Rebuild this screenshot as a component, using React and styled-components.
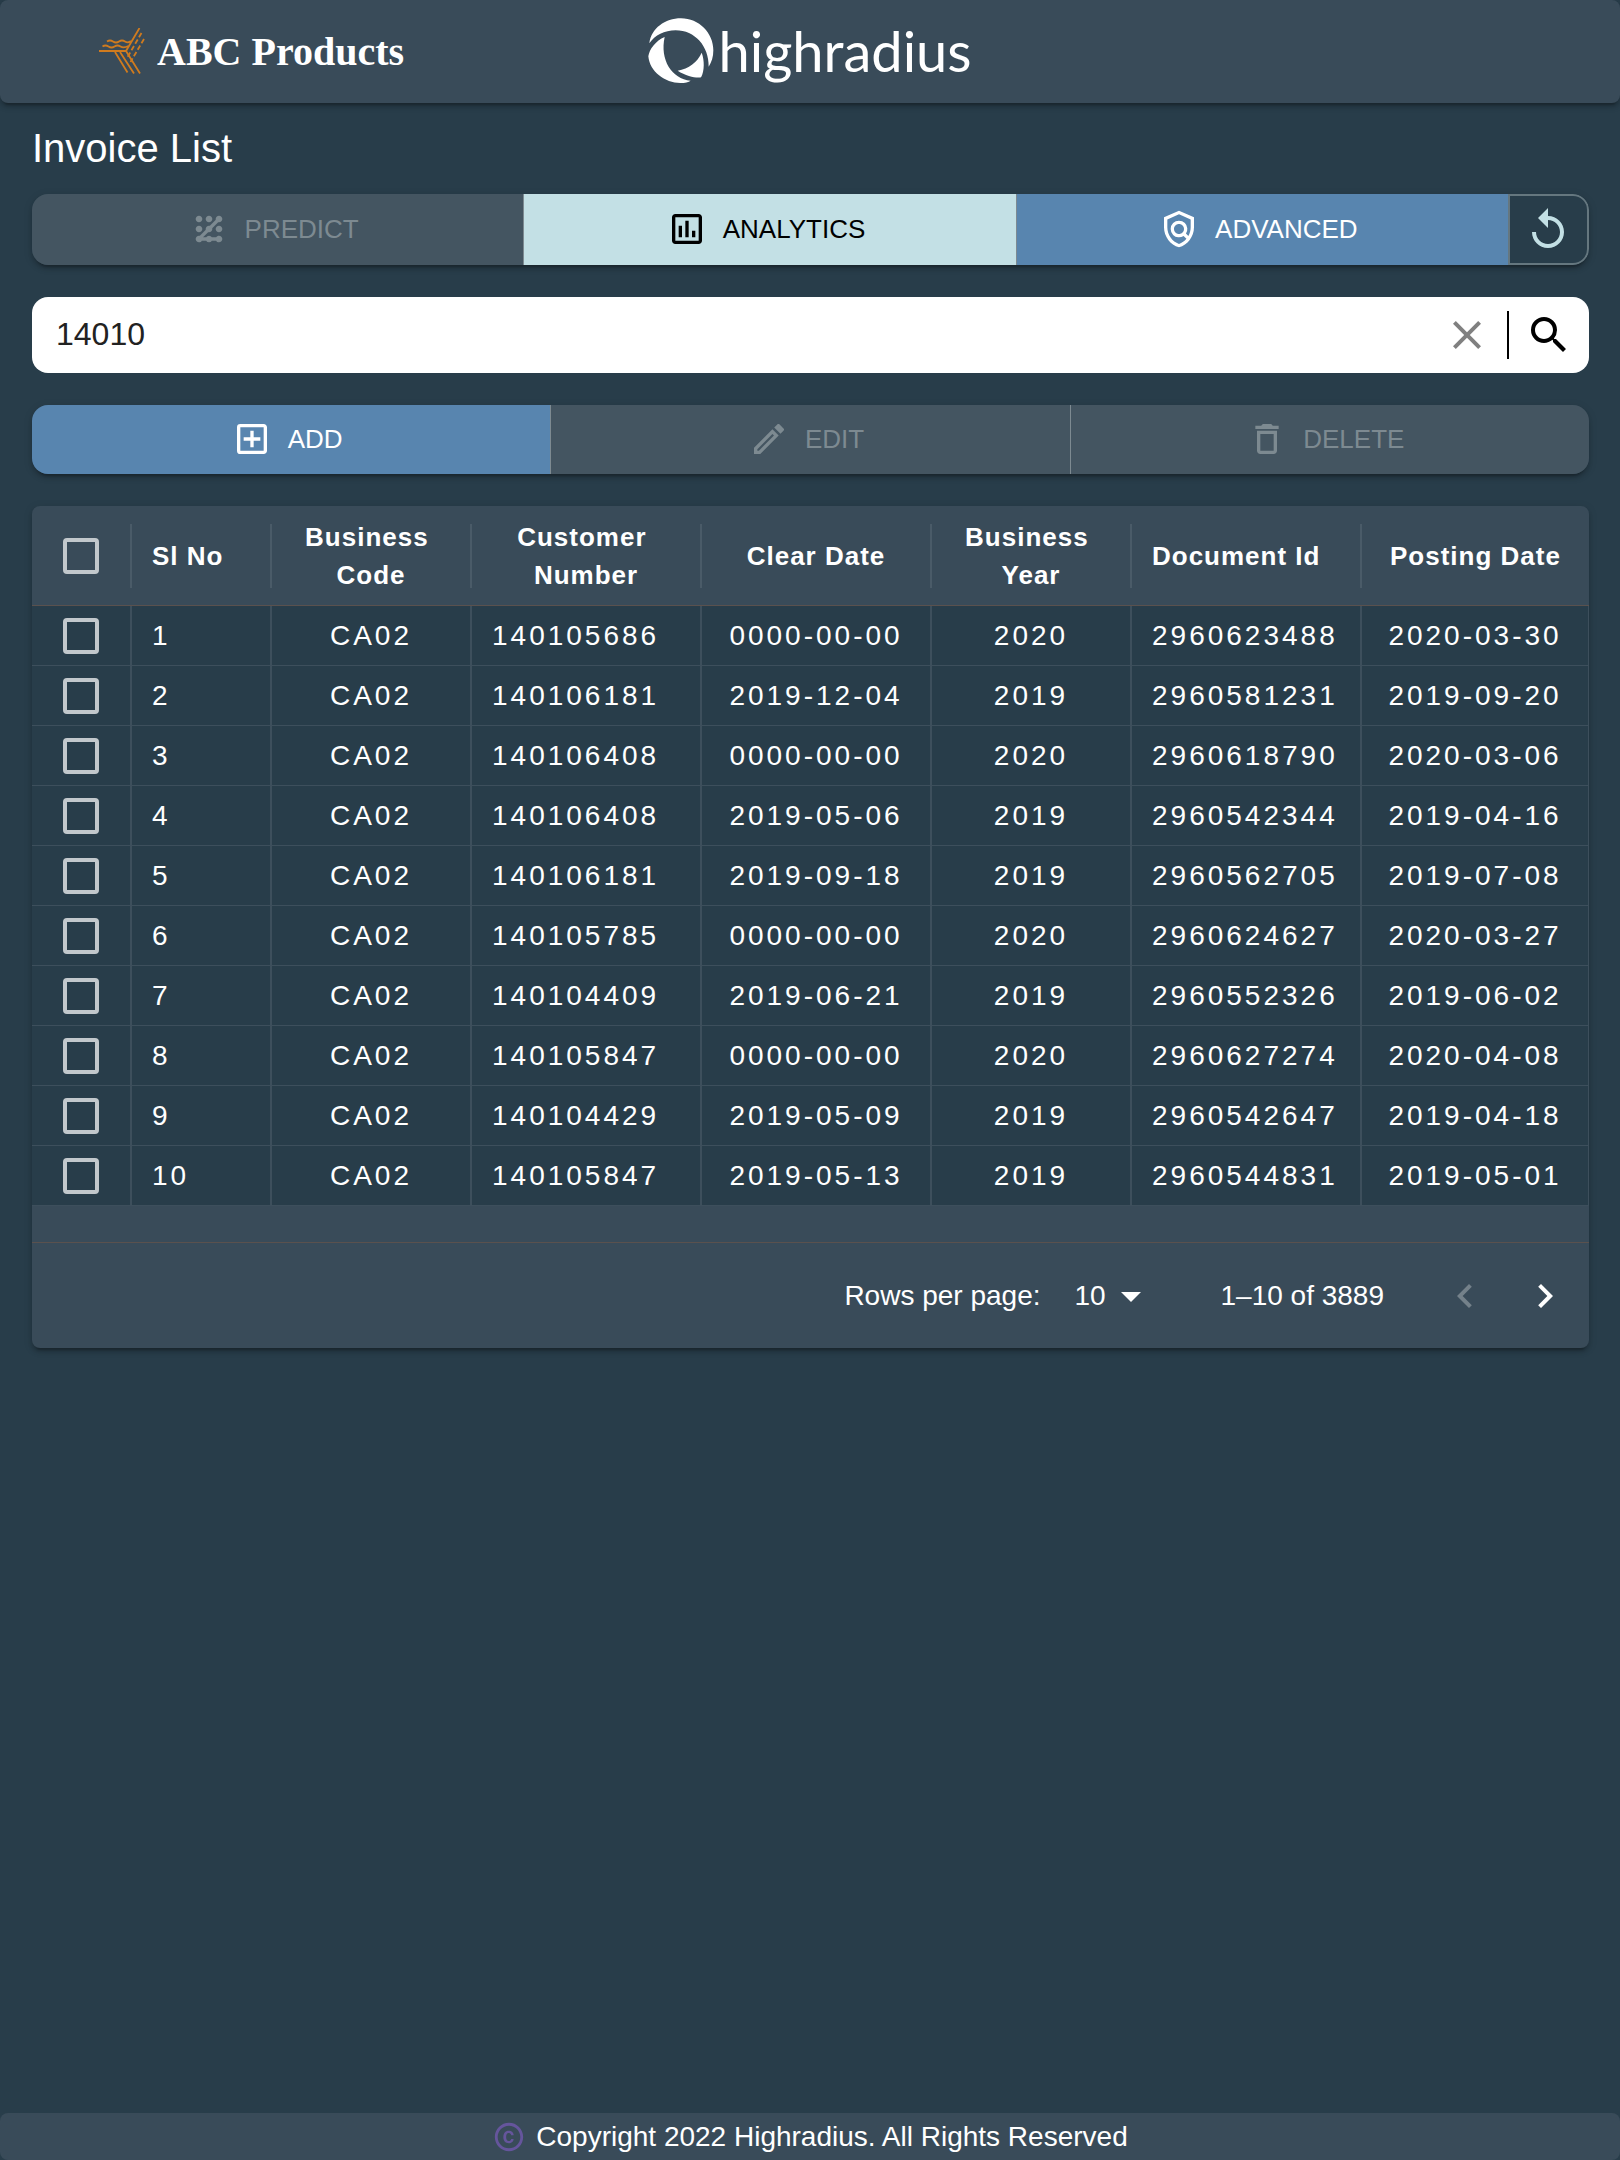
import React, { useState } from "react";
import styled, { createGlobalStyle, css } from "styled-components";
import {
  MdPattern,
  MdOutlineAssessment,
  MdOutlinePolicy,
  MdReplay,
  MdClear,
  MdSearch,
  MdOutlineAddBox,
  MdOutlineEdit,
  MdDeleteOutline,
  MdArrowDropDown,
  MdKeyboardArrowLeft,
  MdKeyboardArrowRight,
  MdOutlineCopyright,
} from "react-icons/md";

const color = {
  page: "#283d4a",
  panel: "#394b59",
  disabled: "#445561",
  muted: "#7d8a91",
  blue: "#5885af",
  light: "#c3e0e5",
  line: "#3d4f5c",
  headLine: "#4a5b68",
  rule: "#5a514e",
};

const elevation =
  "0 6px 2px -4px rgba(0,0,0,.2), 0 4px 4px rgba(0,0,0,.14), 0 2px 10px rgba(0,0,0,.12)";

const GlobalStyle = createGlobalStyle`
  *, *::before, *::after { box-sizing: border-box; }
  body {
    margin: 0;
    background: ${color.page};
    color: #fff;
    font-family: "Liberation Sans", Arial, sans-serif;
  }
  button, input, select { font: inherit; color: inherit; }
`;

const Page = styled.div`
  min-height: 100vh;
  display: flex;
  flex-direction: column;
`;

const Header = styled.header`
  display: grid;
  grid-template-columns: 1fr auto 1fr;
  align-items: center;
  height: 103px;
  padding: 0 32px;
  background: ${color.panel};
  border-radius: 8px;
  box-shadow: ${elevation};
`;

const Brand = styled.div`
  display: flex;
  align-items: center;
  gap: 12px;
  padding-left: 66px;
  font: bold 40px/48px "Liberation Serif", "Times New Roman", serif;
`;

const Logo = styled.div`
  display: flex;
  align-items: center;
  gap: 4px;
  padding-bottom: 2px;
  font: 400 56px/64px Lato, sans-serif;
`;

const Main = styled.main`
  flex: 1;
  padding: 0 31px 32px 32px;
`;

const Title = styled.h1`
  margin: 0;
  padding: 21px 0 22px;
  font-size: 40px;
  line-height: 48px;
  font-weight: 400;
`;

const Stack = styled.div`
  display: flex;
  flex-direction: column;
  gap: 32px;
`;

const ButtonGroup = styled.div`
  display: flex;
  height: ${(p) => p.$height}px;
  border-radius: 16px;
  overflow: hidden;
  box-shadow: ${elevation};
`;

const tones = {
  primary: css`
    background: ${color.blue};
    color: #fff;
  `,
  light: css`
    background: ${color.light};
    color: #000;
  `,
};

const GroupButton = styled.button`
  flex: 1;
  display: flex;
  align-items: center;
  justify-content: center;
  gap: 16px;
  padding: 0 16px 2px;
  border: 0;
  font-size: 26px;
  line-height: 38px;
  text-transform: uppercase;
  cursor: pointer;
  ${(p) => tones[p.$tone]}

  & + & {
    border-left: 1px solid ${color.muted};
  }

  &:disabled {
    background: ${color.disabled};
    color: ${color.muted};
    cursor: default;
  }

  svg {
    width: 40px;
    height: 40px;
    margin-left: -8px;
  }
`;

const ResetButton = styled.button`
  display: flex;
  align-items: center;
  justify-content: center;
  width: 81px;
  padding: 0;
  border: 2px solid #65777f;
  border-radius: 0 16px 16px 0;
  background: ${color.page};
  color: ${color.light};
  cursor: pointer;
`;

const SearchBar = styled.form`
  display: flex;
  align-items: center;
  gap: 16px;
  height: 76px;
  padding: 0 16px 0 24px;
  border-radius: 16px;
  background: #fff;
  color: #000;
`;

const SearchInput = styled.input`
  flex: 1;
  min-width: 0;
  height: 48px;
  padding: 0 0 2px;
  border: 0;
  outline: 0;
  background: transparent;
  color: #222;
  font-size: 32px;
`;

const SearchDivider = styled.span`
  width: 2px;
  height: 48px;
  background: #000;
`;

const IconButton = styled.button`
  display: flex;
  padding: ${(p) => p.$pad || 0}px;
  border: 0;
  background: transparent;
  color: ${(p) => p.$color || "inherit"};
  cursor: pointer;
`;

const Card = styled.section`
  border-radius: 8px;
  background: ${color.panel};
  box-shadow: ${elevation};
`;

const Table = styled.table`
  width: 100%;
  table-layout: fixed;
  border-collapse: separate;
  border-spacing: 0;
`;

const HeadCell = styled.th`
  width: ${(p) => (p.$width ? `${p.$width}px` : "auto")};
  height: 100px;
  padding: 0 22px 0 20px;
  border-bottom: 1px solid ${color.rule};
  text-align: ${(p) => p.$align || "center"};
  white-space: break-spaces;
  font-size: 26px;
  line-height: 38px;
  letter-spacing: 1px;
  background: linear-gradient(${color.headLine}, ${color.headLine}) right center / 2px 64px no-repeat;

  &:last-child {
    padding-right: 20px;
    background: none;
  }
`;

const Cell = styled.td`
  height: 60px;
  padding: 0 20px;
  border-right: 2px solid ${color.line};
  border-bottom: 1px solid ${color.line};
  background: ${color.page};
  text-align: ${(p) => p.$align || "center"};
  white-space: nowrap;
  font-size: 28px;
  line-height: 40px;
  letter-spacing: 3px;

  &:last-child {
    border-right-width: 1px;
  }
`;

const Checkbox = styled.input`
  appearance: none;
  display: block;
  width: 36px;
  height: 36px;
  margin: 0 auto;
  border: 4px solid #c2c8cc;
  border-radius: 4px;
  cursor: pointer;

  &:checked {
    background: ${color.blue};
  }
`;

const Pagination = styled.nav`
  display: flex;
  align-items: center;
  justify-content: flex-end;
  height: 106px;
  margin-top: 36px;
  padding-right: 4px;
  border-top: 1px solid ${color.rule};
  font-size: 28px;
  line-height: 40px;
`;

const PageSize = styled.div`
  position: relative;
  width: 80px;
  margin: 0 66px 0 34px;

  svg {
    position: absolute;
    top: -4px;
    right: 0;
    pointer-events: none;
  }
`;

const Select = styled.select`
  appearance: none;
  display: block;
  width: 100%;
  height: 40px;
  padding: 0 0 2px;
  border: 0;
  outline: 0;
  background: transparent;
`;

const Range = styled.span`
  margin-right: 41px;
`;

const Footer = styled.footer`
  display: flex;
  align-items: center;
  justify-content: center;
  gap: 10px;
  height: 47px;
  border-radius: 8px;
  background: ${color.panel};
  font-size: 28px;
  line-height: 40px;

  svg {
    color: #65559c;
  }
`;

const columns = [
  { label: "Sl No", width: 140, align: "left" },
  { label: "Business Code", width: 200 },
  { label: "Customer Number", width: 230, bodyAlign: "left" },
  { label: "Clear Date", width: 230 },
  { label: "Business Year", width: 200 },
  { label: "Document Id", width: 230, align: "left" },
  { label: "Posting Date" },
];

const rows = [
  ["1", "CA02", "140105686", "0000-00-00", "2020", "2960623488", "2020-03-30"],
  ["2", "CA02", "140106181", "2019-12-04", "2019", "2960581231", "2019-09-20"],
  ["3", "CA02", "140106408", "0000-00-00", "2020", "2960618790", "2020-03-06"],
  ["4", "CA02", "140106408", "2019-05-06", "2019", "2960542344", "2019-04-16"],
  ["5", "CA02", "140106181", "2019-09-18", "2019", "2960562705", "2019-07-08"],
  ["6", "CA02", "140105785", "0000-00-00", "2020", "2960624627", "2020-03-27"],
  ["7", "CA02", "140104409", "2019-06-21", "2019", "2960552326", "2019-06-02"],
  ["8", "CA02", "140105847", "0000-00-00", "2020", "2960627274", "2020-04-08"],
  ["9", "CA02", "140104429", "2019-05-09", "2019", "2960542647", "2019-04-18"],
  ["10", "CA02", "140105847", "2019-05-13", "2019", "2960544831", "2019-05-01"],
];

function BrandMark() {
  return (
    <svg width="47" height="48" viewBox="98 26 47 48" fill="none" stroke="#d07b1e" strokeWidth="1.8" aria-hidden="true">
      <path d="M99 49H126L139.500 26" />
      <path d="M107 39.500q3-2 6 0t6 0 6 0 6-.5M102.500 44.500q3-2 6 0t6 0 6 0 8-.5" />
      <path d="M141.500 31L127 56M144 37L130.500 60" strokeDasharray="5 2.500" />
      <path d="M115 50L127.500 70.500M120 50L134 71.500M126 49L140 71.500" />
    </svg>
  );
}

function HighradiusMark() {
  return (
    <svg width="66" height="66" viewBox="29 23 198 198" fill="#fff" aria-hidden="true">
      <path d="M33 99C39 54 80 24 128 24C182 24 225 68 225 120C225 140 220 155 211 169C212 108 170 60 112 60C78 60 50 75 33 99Z" />
      <path d="M79 80C52 91 33 117 30 138C34 184 80 218 126 218C140 218 151 215 157 211C100 206 64 148 79 80Z" />
      <path d="M118 181C151 175 178 155 190 127C199 150 198 182 189 199C185 206 148 200 118 181Z" />
    </svg>
  );
}

export default function App() {
  const [query, setQuery] = useState("14010");
  const [pageSize, setPageSize] = useState("10");

  return (
    <>
      <GlobalStyle />
      <Page>
        <Header>
          <Brand>
            <BrandMark />
            ABC Products
          </Brand>
          <Logo>
            <HighradiusMark />
            highradius
          </Logo>
        </Header>

        <Main>
          <Title>Invoice List</Title>
          <Stack>
            <ButtonGroup $height={71}>
              <GroupButton type="button" disabled>
                <MdPattern />
                Predict
              </GroupButton>
              <GroupButton type="button" $tone="light">
                <MdOutlineAssessment />
                Analytics
              </GroupButton>
              <GroupButton type="button" $tone="primary">
                <MdOutlinePolicy />
                Advanced
              </GroupButton>
              <ResetButton type="button" aria-label="Reset">
                <MdReplay size={48} />
              </ResetButton>
            </ButtonGroup>

            <SearchBar onSubmit={(e) => e.preventDefault()}>
              <SearchInput
                type="text"
                aria-label="Search customer number"
                value={query}
                onChange={(e) => setQuery(e.target.value)}
              />
              <IconButton type="button" aria-label="Clear" $color="#808080" onClick={() => setQuery("")}>
                <MdClear size={48} />
              </IconButton>
              <SearchDivider />
              <IconButton type="submit" aria-label="Search">
                <MdSearch size={48} />
              </IconButton>
            </SearchBar>

            <ButtonGroup $height={69}>
              <GroupButton type="button" $tone="primary">
                <MdOutlineAddBox />
                Add
              </GroupButton>
              <GroupButton type="button" disabled>
                <MdOutlineEdit />
                Edit
              </GroupButton>
              <GroupButton type="button" disabled>
                <MdDeleteOutline />
                Delete
              </GroupButton>
            </ButtonGroup>

            <Card>
              <Table>
                <thead>
                  <tr>
                    <HeadCell $width={100} scope="col">
                      <Checkbox type="checkbox" aria-label="Select all rows" />
                    </HeadCell>
                    {columns.map((c) => (
                      <HeadCell key={c.label} scope="col" $width={c.width} $align={c.align}>
                        {c.label}
                      </HeadCell>
                    ))}
                  </tr>
                </thead>
                <tbody>
                  {rows.map((row) => (
                    <tr key={row[0]}>
                      <Cell>
                        <Checkbox type="checkbox" aria-label={`Select row ${row[0]}`} />
                      </Cell>
                      {row.map((value, i) => (
                        <Cell key={columns[i].label} $align={columns[i].bodyAlign || columns[i].align}>
                          {value}
                        </Cell>
                      ))}
                    </tr>
                  ))}
                </tbody>
              </Table>
              <Pagination aria-label="Pagination">
                <label htmlFor="page-size">Rows per page:</label>
                <PageSize>
                  <Select id="page-size" value={pageSize} onChange={(e) => setPageSize(e.target.value)}>
                    <option>10</option>
                    <option>20</option>
                    <option>50</option>
                  </Select>
                  <MdArrowDropDown size={48} />
                </PageSize>
                <Range>1–10 of 3889</Range>
                <IconButton type="button" aria-label="Previous page" disabled $pad={16} $color="#74818a">
                  <MdKeyboardArrowLeft size={48} />
                </IconButton>
                <IconButton type="button" aria-label="Next page" $pad={16}>
                  <MdKeyboardArrowRight size={48} />
                </IconButton>
              </Pagination>
            </Card>
          </Stack>
        </Main>

        <Footer>
          <MdOutlineCopyright size={34} />
          Copyright 2022 Highradius. All Rights Reserved
        </Footer>
      </Page>
    </>
  );
}
